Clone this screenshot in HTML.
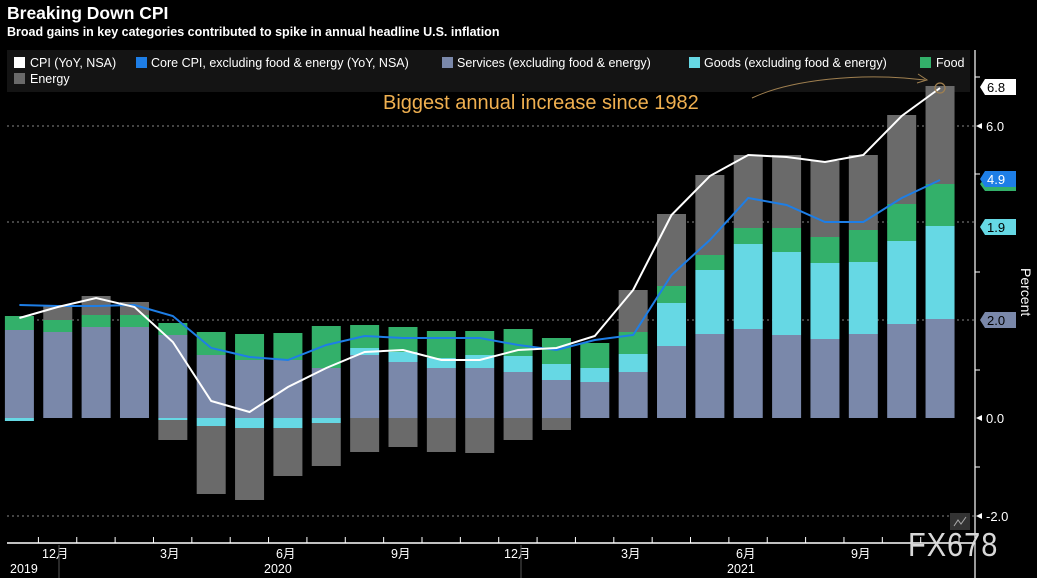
<!DOCTYPE html>
<html><head><meta charset="utf-8">
<style>
html,body{margin:0;padding:0;background:#000;width:1037px;height:578px;overflow:hidden;font-family:"Liberation Sans","Noto Sans CJK SC",sans-serif;}
svg{display:block}
</style></head><body>
<svg id="c" width="1037" height="578" xmlns="http://www.w3.org/2000/svg" font-family="Liberation Sans, Noto Sans CJK SC, sans-serif">
<text x="7" y="19" fill="#fff" font-size="17.5" font-weight="bold">Breaking Down CPI</text>
<text x="7" y="36" fill="#fff" font-size="12.5" font-weight="bold">Broad gains in key categories contributed to spike in annual headline U.S. inflation</text>
<rect x="7" y="50" width="963" height="42" fill="#141414"/>
<g font-size="12.5" fill="#fff">
<rect x="14" y="57" width="11" height="11" fill="#fff"/><text x="30" y="67">CPI (YoY, NSA)</text>
<rect x="136" y="57" width="11" height="11" fill="#1e7ee6"/><text x="151" y="67">Core CPI, excluding food &amp; energy (YoY, NSA)</text>
<rect x="442" y="57" width="11" height="11" fill="#7a88aa"/><text x="457" y="67">Services (excluding food &amp; energy)</text>
<rect x="689" y="57" width="11" height="11" fill="#66d8e4"/><text x="704" y="67">Goods (excluding food &amp; energy)</text>
<rect x="920" y="57" width="11" height="11" fill="#33b06a"/><text x="936" y="67">Food</text>
<rect x="14" y="73" width="11" height="11" fill="#6a6a6a"/><text x="30" y="83">Energy</text>
</g>
<g id="grid" stroke="#888" stroke-dasharray="2,3" stroke-width="1">
<line x1="7" y1="126" x2="975" y2="126"/><line x1="7" y1="222" x2="975" y2="222"/>
<line x1="7" y1="320" x2="975" y2="320"/><line x1="7" y1="516" x2="975" y2="516"/>
</g>
<g id="bars"></g>
<polyline id="core" fill="none" stroke="#1e7ee6" stroke-width="2"/>
<polyline id="cpi" fill="none" stroke="#fff" stroke-width="2"/>
<text x="383" y="109" fill="#f0b050" font-size="20">Biggest annual increase since 1982</text>
<path d="M752 98 C790 80 860 72 925 80" fill="none" stroke="#a08050" stroke-width="1"/>
<path d="M918 74 L927 80 L917 83" fill="none" stroke="#a08050" stroke-width="1"/>
<circle cx="940" cy="88" r="5" fill="none" stroke="#a08050" stroke-width="1.2"/>
<line x1="975" y1="50" x2="975" y2="578" stroke="#fff" stroke-width="1.2"/>
<g stroke="#fff"><line x1="975" y1="77" x2="980" y2="77"/><line x1="975" y1="174" x2="980" y2="174"/><line x1="975" y1="272" x2="980" y2="272"/><line x1="975" y1="370" x2="980" y2="370"/><line x1="975" y1="467" x2="980" y2="467"/></g>
<g font-size="13">
<path d="M985 79 H1016 V95 H985 L980 87 Z" fill="#fff"/><text x="987" y="92" fill="#000">6.8</text>
<path d="M976 126 L982 123 V129 Z" fill="#fff"/><text x="986" y="131" fill="#fff">6.0</text>
<path d="M985 178 H1016 V191 H985 L980 184 Z" fill="#33b06a"/>
<path d="M985 171 H1016 V187 H985 L980 179 Z" fill="#1e7ee6"/><text x="987" y="184" fill="#fff">4.9</text>
<path d="M985 219 H1016 V235 H985 L980 227 Z" fill="#66d8e4"/><text x="987" y="232" fill="#000">1.9</text>
<path d="M985 312 H1016 V328 H985 L980 320 Z" fill="#7a88aa"/><text x="987" y="325" fill="#000">2.0</text>
<path d="M976 418 L982 415 V421 Z" fill="#fff"/><text x="986" y="423" fill="#fff">0.0</text>
<path d="M976 516 L982 513 V519 Z" fill="#fff"/><text x="986" y="521" fill="#fff">-2.0</text>
</g>
<text transform="translate(1021,268) rotate(90)" fill="#fff" font-size="14">Percent</text>
<rect x="950" y="513" width="20" height="17" fill="#333"/>
<path d="M954 526 L958 520 L961 524 L966 517" stroke="#aaa" fill="none"/>
<line x1="7" y1="543" x2="975" y2="543" stroke="#fff" stroke-width="1.5"/>
<g id="ticks" stroke="#fff"></g>
<g fill="#fff" font-size="12.5">
<text x="42" y="558">12月</text><text x="160" y="558">3月</text><text x="276" y="558">6月</text><text x="391" y="558">9月</text>
<text x="504" y="558">12月</text><text x="621" y="558">3月</text><text x="736" y="558">6月</text><text x="851" y="558">9月</text>
<text x="10" y="573">2019</text><text x="264" y="573">2020</text><text x="727" y="573">2021</text>
</g>
<line x1="59" y1="545" x2="59" y2="578" stroke="#555"/><line x1="521" y1="545" x2="521" y2="578" stroke="#555"/>
<text x="0" y="0" transform="translate(908,556) scale(1.0,1.15)" fill="#d8d8d8" font-size="29" style="letter-spacing:1px">FX678</text>
</svg>
<script>
var ns="http://www.w3.org/2000/svg";
var d=[[330,421,316,421],[332,418,320,306],[327,418,315,296],[327,418,315,302],[335,420,323,440],
[355,426,332,494],[360,428,334,500],[360,428,333,476],[368,423,326,466],[355,348,325,452],
[362,352,327,447],[368,358,331,452],[368,355,331,453],[372,356,329,440],[380,364,338,430],
[382,368,343,418],[372,354,332,290],[346,303,286,214],[334,270,255,175],[329,244,228,155],
[335,252,228,155],[339,263,237,161],[334,262,230,155],[324,241,204,115],[319,226,184,86]];
var cpi=[318,307,298,307,342,401,412,387,368,352,350,360,360,350,348,336,290,215,176,155,157,162,155,116,88];
var core=[305,306,306,305,316,348,357,360,345,336,338,338,338,345,350,340,335,275,240,198,205,222,222,198,180];
var g=document.getElementById("bars"),Z=418;
function r(x,y1,y2,c){var a=Math.min(y1,y2),b=Math.max(y1,y2);if(b-a<0.5)return;var e=document.createElementNS(ns,"rect");e.setAttribute("x",x);e.setAttribute("y",a);e.setAttribute("width",29);e.setAttribute("height",b-a);e.setAttribute("fill",c);g.appendChild(e);}
var pc="",pk="";
for(var i=0;i<25;i++){var cx=19.4+i*38.36,x=cx-14.5,v=d[i];
 r(x,Z,v[0],"#7a88aa");
 var gt=v[1],ft=v[2];
 if(gt<Z){r(x,v[0],gt,"#66d8e4");r(x,gt,ft,"#33b06a");}
 else{r(x,Z,gt,"#66d8e4");r(x,v[0],ft,"#33b06a");}
 if(v[3]<Z){r(x,ft,v[3],"#6a6a6a");}else{var st=(gt>Z)?gt:Z;r(x,st,v[3],"#6a6a6a");}
 pc+=cx+","+cpi[i]+" ";pk+=cx+","+core[i]+" ";}
document.getElementById("cpi").setAttribute("points",pc);
document.getElementById("core").setAttribute("points",pk);
var t=document.getElementById("ticks");
for(var i=0;i<25;i++){var cx=19.4+i*38.36+19;var l=document.createElementNS(ns,"line");l.setAttribute("x1",cx);l.setAttribute("x2",cx);l.setAttribute("y1",537);l.setAttribute("y2",543);t.appendChild(l);}
</script>
</body></html>
